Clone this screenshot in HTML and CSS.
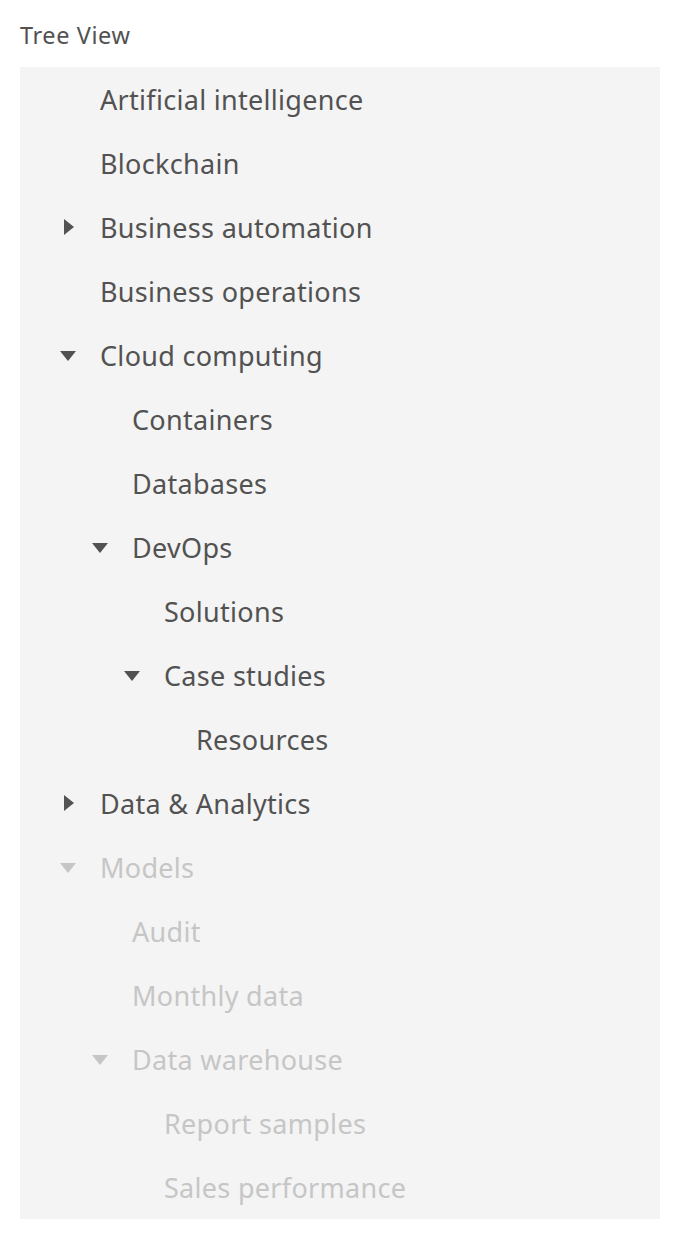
FILE: index.html
```html
<!DOCTYPE html>
<html lang="en">

<head>
    <meta charset="UTF-8">
    <meta name="viewport" content="width=device-width, initial-scale=1.0">
    <title>Tree View</title>
    <link rel="stylesheet" href="styles.css">
</head>

<body>
    <div class="tree-wrapper">
        <p class="tree-label">Tree View</p>
        <ul class="tree">
            <li class="tree-node depth-0"><span class="toggle"></span><span class="node-text">Artificial intelligence</span></li>
            <li class="tree-node depth-0"><span class="toggle"></span><span class="node-text">Blockchain</span></li>
            <li class="tree-node depth-0">
                <span class="toggle"><svg viewBox="0 0 32 32" class="caret collapsed"><path d="M24 12L16 22 8 12z"/></svg></span>
                <span class="node-text">Business automation</span>
            </li>
            <li class="tree-node depth-0"><span class="toggle"></span><span class="node-text">Business operations</span></li>
            <li class="tree-node depth-0">
                <span class="toggle"><svg viewBox="0 0 32 32" class="caret"><path d="M24 12L16 22 8 12z"/></svg></span>
                <span class="node-text">Cloud computing</span>
            </li>
            <li class="tree-node depth-1"><span class="toggle"></span><span class="node-text">Containers</span></li>
            <li class="tree-node depth-1"><span class="toggle"></span><span class="node-text">Databases</span></li>
            <li class="tree-node depth-1">
                <span class="toggle"><svg viewBox="0 0 32 32" class="caret"><path d="M24 12L16 22 8 12z"/></svg></span>
                <span class="node-text">DevOps</span>
            </li>
            <li class="tree-node depth-2"><span class="toggle"></span><span class="node-text">Solutions</span></li>
            <li class="tree-node depth-2">
                <span class="toggle"><svg viewBox="0 0 32 32" class="caret"><path d="M24 12L16 22 8 12z"/></svg></span>
                <span class="node-text">Case studies</span>
            </li>
            <li class="tree-node depth-3"><span class="toggle"></span><span class="node-text">Resources</span></li>
            <li class="tree-node depth-0">
                <span class="toggle"><svg viewBox="0 0 32 32" class="caret collapsed"><path d="M24 12L16 22 8 12z"/></svg></span>
                <span class="node-text">Data &amp; Analytics</span>
            </li>

            <!-- disabled branch -->
            <li class="tree-node depth-0 disabled">
                <span class="toggle"><svg viewBox="0 0 32 32" class="caret"><path d="M24 12L16 22 8 12z"/></svg></span>
                <span class="node-text">Models</span>
            </li>
            <li class="tree-node depth-1 disabled"><span class="toggle"></span><span class="node-text">Audit</span></li>
            <li class="tree-node depth-1 disabled"><span class="toggle"></span><span class="node-text">Monthly data</span></li>
            <li class="tree-node depth-1 disabled">
                <span class="toggle"><svg viewBox="0 0 32 32" class="caret"><path d="M24 12L16 22 8 12z"/></svg></span>
                <span class="node-text">Data warehouse</span>
            </li>
            <li class="tree-node depth-2 disabled"><span class="toggle"></span><span class="node-text">Report samples</span></li>
            <li class="tree-node depth-2 disabled"><span class="toggle"></span><span class="node-text">Sales performance</span></li>
        </ul>
    </div>
</body>

</html>
```

FILE: styles.css
```css
/* Basic Styles */
body {
    font-family: "Noto Sans", Arial, sans-serif;
    background-color: #fff;
    margin: 0;
    padding: 0;
}

.tree-wrapper {
    padding: 19px 20px 20px;
}

.tree-label {
    margin: 0 0 16px;
    font-size: 23.5px;
    line-height: 32px;
    letter-spacing: 0.6px;
    color: #525252;
}

.tree {
    list-style: none;
    margin: 0;
    padding: 0;
    background-color: #f4f4f4;
}

.tree-node {
    display: flex;
    align-items: center;
    height: 64px;
    font-size: 27px;
    letter-spacing: 0.3px;
    color: #525252;
}

.tree-node.depth-0 { padding-left: 32px; }
.tree-node.depth-1 { padding-left: 64px; }
.tree-node.depth-2 { padding-left: 96px; }
.tree-node.depth-3 { padding-left: 128px; }

.toggle {
    width: 32px;
    height: 32px;
    margin-right: 16px;
    flex-shrink: 0;
}

.caret {
    display: block;
    width: 32px;
    height: 32px;
    fill: #525252;
}

.caret.collapsed {
    transform: rotate(-90deg);
}

.tree-node.disabled {
    color: #c6c6c6;
}

.tree-node.disabled .caret {
    fill: #c6c6c6;
}
```
